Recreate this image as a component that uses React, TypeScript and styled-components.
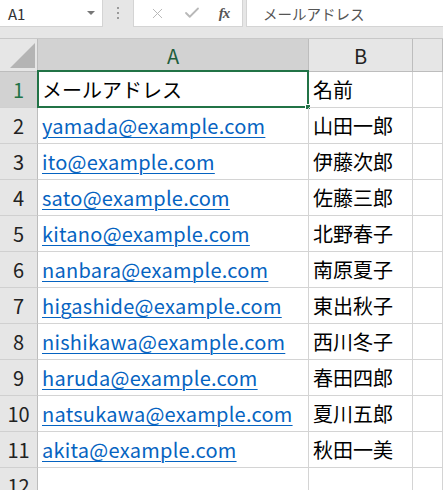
import { FC, Fragment } from "react";
import styled, { createGlobalStyle } from "styled-components";
import { X, Check } from "lucide-react";

const GlobalStyle = createGlobalStyle`
  html, body {
    margin: 0;
    padding: 0;
    background: #ffffff;
    overflow: hidden;
  }
  * { box-sizing: border-box; }
`;

const JP = `"Noto Sans CJK JP", "Noto Sans", sans-serif`;

const Page = styled.div`
  width: 443px;
  height: 490px;
  overflow: hidden;
  font-family: ${JP};
  background: #fff;
`;

const Toolbar = styled.div`
  display: flex;
  align-items: stretch;
  height: 39px;
  padding-bottom: 11px;
  background: #e6e6e6;
  border-bottom: 1px solid #c8c8c8;
`;

const NameBox = styled.div`
  width: 103px;
  background: #fff;
  border-right: 1px solid #d4d4d4;
  border-bottom: 1px solid #d4d4d4;
  display: flex;
  align-items: center;
  justify-content: space-between;
  padding: 0 7px 0 8px;
  font-size: 15px;
  color: #333;
`;

const Caret = styled.span`
  width: 0;
  height: 0;
  border-left: 4px solid transparent;
  border-right: 4px solid transparent;
  border-top: 4px solid #777;
`;

const Grip = styled.div`
  width: 30px;
  display: flex;
  flex-direction: column;
  align-items: center;
  justify-content: center;
  gap: 3px;
  padding-bottom: 1px;
`;

const GripDot = styled.span`
  width: 2px;
  height: 2px;
  background: #9a9a9a;
`;

const ButtonBox = styled.div`
  width: 110px;
  background: #fff;
  border: 1px solid #d4d4d4;
  border-top: none;
  display: flex;
  align-items: center;
  justify-content: space-around;
  padding: 0 4px 0 6px;
`;

const Fx = styled.span`
  font-family: "Liberation Serif", serif;
  font-style: italic;
  font-weight: bold;
  font-size: 15px;
  color: #555;
  letter-spacing: -1px;
`;

const FormulaInput = styled.div`
  flex: 1;
  margin-left: 3px;
  background: #fff;
  border-left: 1px solid #d4d4d4;
  border-bottom: 1px solid #d4d4d4;
  display: flex;
  align-items: center;
  padding-left: 16px;
  font-size: 14.5px;
  color: #555;
`;

const Grid = styled.div`
  display: grid;
  grid-template-columns: 38px 271px 104px 1fr;
  grid-template-rows: 33px;
  grid-auto-rows: 36px;
`;

const Corner = styled.div`
  position: relative;
  background: #e6e6e6;
  border-right: 1px solid #bdbdbd;
  border-bottom: 1px solid #bdbdbd;
`;

const CornerMark = styled.span`
  position: absolute;
  right: 2px;
  bottom: 3px;
  width: 0;
  height: 0;
  border-left: 25px solid transparent;
  border-bottom: 25px solid #b4b4b4;
`;

const ColHead = styled.div<{ $active?: boolean }>`
  background: ${(p) => (p.$active ? "#d2d2d2" : "#e6e6e6")};
  color: ${(p) => (p.$active ? "#1e5e3c" : "#222")};
  border-right: 1px solid #bdbdbd;
  border-bottom: 1px solid #bdbdbd;
  display: flex;
  align-items: center;
  justify-content: center;
  font-size: 20px;
  padding-top: 1px;
`;

const RowHead = styled.div<{ $active?: boolean }>`
  background: ${(p) => (p.$active ? "#d2d2d2" : "#e6e6e6")};
  color: ${(p) => (p.$active ? "#217346" : "#222")};
  border-right: 1px solid #bdbdbd;
  border-bottom: 1px solid #d0d0d0;
  display: flex;
  align-items: center;
  justify-content: center;
  font-size: 20px;
`;

const Cell = styled.div<{ $link?: boolean }>`
  position: relative;
  border-right: 1px solid #d4d4d4;
  border-bottom: 1px solid #d4d4d4;
  display: flex;
  align-items: center;
  padding-left: 4px;
  font-size: 20px;
  white-space: nowrap;
  color: ${(p) => (p.$link ? "#0563c1" : "#000")};
  text-decoration: ${(p) => (p.$link ? "underline" : "none")};
  letter-spacing: ${(p) => (p.$link ? "0.25px" : "0")};
  text-underline-offset: 3px;
  text-decoration-thickness: 1px;
`;

const Selection = styled.span`
  position: absolute;
  left: -1px;
  top: -2px;
  right: -1px;
  bottom: -1px;
  border: 2px solid #217346;
  pointer-events: none;
`;

const Handle = styled.span`
  position: absolute;
  right: -4px;
  bottom: -4px;
  width: 6px;
  height: 6px;
  background: #217346;
  border: 1px solid #fff;
`;

interface IRow {
  email: string
  name: string
}

const rows: IRow[] = [
  { email: "yamada@example.com", name: "山田一郎" },
  { email: "ito@example.com", name: "伊藤次郎" },
  { email: "sato@example.com", name: "佐藤三郎" },
  { email: "kitano@example.com", name: "北野春子" },
  { email: "nanbara@example.com", name: "南原夏子" },
  { email: "higashide@example.com", name: "東出秋子" },
  { email: "nishikawa@example.com", name: "西川冬子" },
  { email: "haruda@example.com", name: "春田四郎" },
  { email: "natsukawa@example.com", name: "夏川五郎" },
  { email: "akita@example.com", name: "秋田一美" },
];

const App: FC = () => {
  return (
    <Page>
      <GlobalStyle />
      <Toolbar>
        <NameBox>
          A1
          <Caret />
        </NameBox>
        <Grip>
          <GripDot />
          <GripDot />
          <GripDot />
        </Grip>
        <ButtonBox>
          <X size={17} strokeWidth={1.4} color="#b8b8b8" />
          <Check size={18} strokeWidth={2.4} color="#b8b8b8" />
          <Fx>fx</Fx>
        </ButtonBox>
        <FormulaInput>メールアドレス</FormulaInput>
      </Toolbar>
      <Grid>
        <Corner>
          <CornerMark />
        </Corner>
        <ColHead $active>A</ColHead>
        <ColHead>B</ColHead>
        <ColHead />

        <RowHead $active>1</RowHead>
        <Cell>
          メールアドレス
          <Selection>
            <Handle />
          </Selection>
        </Cell>
        <Cell>名前</Cell>
        <Cell />

        {rows.map((r, i) => (
          <Fragment key={r.email}>
            <RowHead>{i + 2}</RowHead>
            <Cell $link>{r.email}</Cell>
            <Cell>{r.name}</Cell>
            <Cell />
          </Fragment>
        ))}

        <RowHead>12</RowHead>
        <Cell />
        <Cell />
        <Cell />
      </Grid>
    </Page>
  )
}

export default App;
